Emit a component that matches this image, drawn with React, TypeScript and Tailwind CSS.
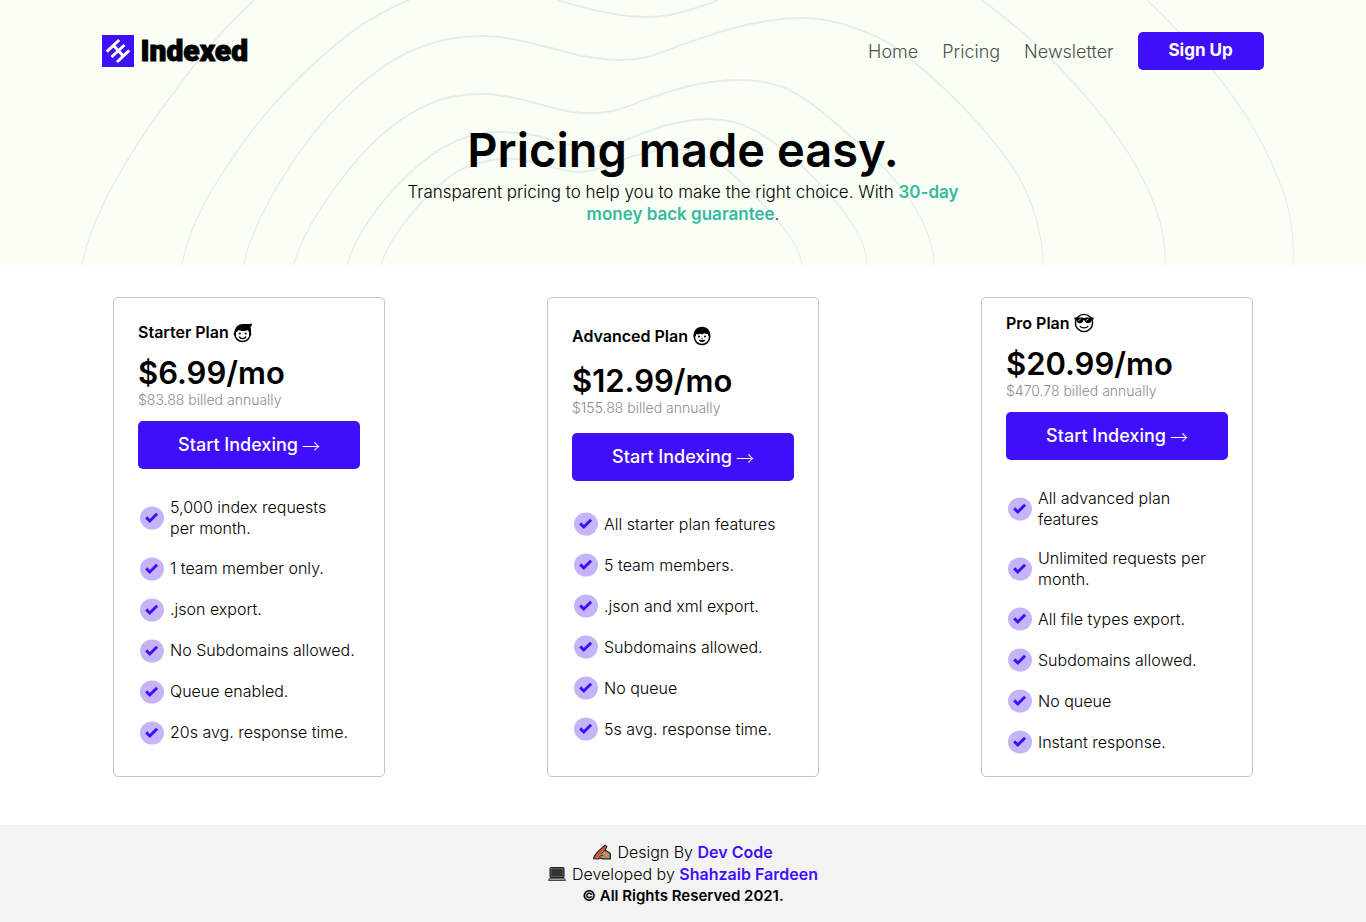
import React from "react";

type Point = [number, number];

const contours: Point[][] = [
  [[82, 265], [102, 207], [142, 137], [193, 67], [223, 31], [254, 0]],
  [[1147, 0], [1179, 32], [1213, 70], [1253, 127], [1280, 183], [1291, 223], [1293, 265]],
  [[182, 265], [195, 223], [220, 177], [263, 117], [307, 70], [353, 31], [380, 14], [409, 0]],
  [[557, 0], [590, 9], [620, 15], [647, 17], [670, 15], [693, 9], [718, 0]],
  [[981, 0], [1010, 22], [1047, 55], [1093, 105], [1127, 151], [1150, 194], [1162, 230], [1165, 265]],
  [[244, 265], [255, 230], [280, 182], [313, 134], [353, 91], [397, 58], [440, 41], [482, 36], [513, 39], [547, 47], [583, 56], [620, 60], [647, 57], [687, 43], [730, 29], [767, 21], [803, 18], [835, 22], [860, 30], [890, 44], [927, 73], [960, 104], [993, 141], [1020, 179], [1037, 222], [1043, 265]],
  [[294, 265], [308, 230], [337, 185], [370, 146], [405, 117], [443, 99], [482, 94], [510, 97], [543, 105], [573, 112], [595, 113], [617, 110], [653, 97], [693, 85], [737, 80], [773, 84], [800, 96], [833, 121], [882, 166], [910, 200], [928, 234], [934, 265]],
  [[347, 265], [363, 230], [393, 190], [433, 154], [467, 137], [497, 132], [533, 135], [563, 143], [590, 147], [620, 142], [657, 128], [687, 121], [710, 119], [740, 124], [773, 142], [807, 171], [840, 207], [860, 238], [867, 265]],
  [[381, 265], [397, 233], [427, 197], [460, 170], [493, 160], [520, 159], [543, 165], [577, 172], [600, 168], [637, 155], [673, 149], [703, 155], [730, 172], [753, 194], [777, 220], [794, 243], [802, 265]],
];

// Control point past the end of a curve, so that it keeps bending there.
const beyond = (a: number[], b: number[], c: number[]) => [3 * a[0] - 3 * b[0] + c[0], 3 * a[1] - 3 * b[1] + c[1]];

// Catmull-Rom spline through the points; x is doubled because the group is
// drawn at half width, which keeps flat stretches heavier than steep ones.
function toPath(points: Point[]): string {
  const p = points.map(([x, y]) => [x * 2, y]);
  const n = p.length;
  const q = [beyond(p[0], p[1], p[2]), ...p, beyond(p[n - 1], p[n - 2], p[n - 3])];
  let d = `M${p[0][0]} ${p[0][1]}`;
  for (let i = 0; i < n - 1; i++) {
    const [a, b, c, e] = q.slice(i, i + 4);
    d += `C${b[0] + (c[0] - a[0]) / 6} ${b[1] + (c[1] - a[1]) / 6} ${c[0] - (e[0] - b[0]) / 6} ${c[1] - (e[1] - b[1]) / 6} ${c[0]} ${c[1]}`;
  }
  return d;
}

function Contours() {
  return (
    <svg className="absolute inset-0 h-full w-full" viewBox="0 0 1366 265" preserveAspectRatio="none" aria-hidden="true">
      <g transform="scale(0.5 1)" fill="none" stroke="#e5ece9" strokeWidth="2">
        {contours.map((c, i) => (
          <path key={i} d={toPath(c)} />
        ))}
      </g>
    </svg>
  );
}

function LogoMark() {
  return (
    <svg className="h-8 w-8" viewBox="0 0 32 32" aria-hidden="true">
      <rect width="32" height="32" fill="#400ffa" />
      <g stroke="#f9fff4" strokeWidth="3" fill="none">
        <path d="M4.800 16.700 17.200 5M9.500 22 15.500 16.500M16.500 15.500 22.500 10M15 27 27.300 15.400M11.500 10.500 21.500 21.200" />
      </g>
    </svg>
  );
}

function CheckBadge() {
  return (
    <svg className="h-6 w-6 shrink-0" viewBox="0 0 24 24" aria-hidden="true">
      <ellipse cx="12" cy="12" rx="12" ry="11.5" fill="#c5b5f8" />
      <path d="M6.200 11.400 9.800 15 17.100 7.700" fill="none" stroke="#400ffa" strokeWidth="3" />
    </svg>
  );
}

function StarterFace() {
  return (
    <svg className="h-5 w-5" viewBox="0 0 20 20" aria-hidden="true">
      <circle cx="9.500" cy="11" r="7.600" fill="#fff" stroke="#000" strokeWidth="1.500" />
      <path d="M1.500 9.500C2 3.500 6 .8 10 1c3 .2 6 .2 9-.6-.2 2-.6 3-1.600 3.600.7 1.700.8 3.300.6 5.500-1.500-.5-2.300-1.500-2.600-2.500C12 8.800 8 8 5.500 7 5 8.500 3.500 9.500 1.500 9.500Z" />
      <path d="M.9 9.500c1.700-.4 2.200 1 1.800 3.500-1.700.2-2.500-1.500-1.800-3.500ZM18 9.500c-1.600-.2-2 1.500-1.500 3.500 1.700 0 2.300-1.600 1.500-3.500Z" />
      <circle cx="6.800" cy="10.500" r="1.100" /><circle cx="12.600" cy="10.500" r="1.100" />
      <path d="M6 13.700c1.900 2.600 5.300 2.600 7.200 0" fill="none" stroke="#000" strokeWidth="1.400" />
    </svg>
  );
}

function AdvancedFace() {
  return (
    <svg className="h-5 w-5" viewBox="0 0 20 20" aria-hidden="true">
      <circle cx="10" cy="11" r="7.600" fill="#fff" stroke="#000" strokeWidth="1.500" />
      <path d="M1.700 11.500C.7 4.500 5 .8 10 .8s9.300 3.700 8.300 10.700c-1.700-.8-2.400-2.200-2.600-4-1 .7-2.500.5-3.700-.5-.8 1.500-2.800 1.600-4 .6-.9.9-2 1.200-3.700.4C4.300 9.500 3.300 10.800 1.700 11.500Z" />
      <circle cx="7" cy="10.600" r="1" /><circle cx="13" cy="10.600" r="1" />
      <path d="M7 14.300c1.700 1.800 4.300 1.800 6 0Z" stroke="#000" strokeWidth=".9" />
      <path d="M9.200 12.300h1.600" stroke="#000" strokeWidth=".8" />
    </svg>
  );
}

function ProFace() {
  return (
    <svg className="h-5 w-5" viewBox="0 0 20 20" aria-hidden="true">
      <circle cx="10" cy="10" r="8.600" fill="#fff" stroke="#000" strokeWidth="1.400" />
      <path d="M.5 4.200c3 .6 6-.3 9.500.7 3.500-1 6.500-.1 9.500-.7v2.200l-2 .4c-.3 2.600-1.500 3.400-3.500 3.400-2.200 0-3-1.400-3.400-3h-1.200C9 8.800 8.200 10.200 6 10.200c-2 0-3.200-.8-3.500-3.400l-2-.4Z" />
      <path d="M4.300 7.700 6.800 5.800M12 7.700l2.500-1.900" stroke="#fff" strokeWidth=".8" />
      <path d="M5.700 12.700c1.700 3 6.900 3 8.600 0" fill="none" stroke="#000" strokeWidth="1.200" />
    </svg>
  );
}

function WritingHand() {
  return (
    <svg className="h-[18px] w-[18px]" viewBox="0 0 18 18" aria-hidden="true">
      <path d="M.6 15.700C1 12.500 3.500 10 6.500 7.200L12 2.200l1.800 1.500-2 3.500 2.400 1 3.200 2.600v5H9.500l-2-.8-2 1Z" fill="#b98c60" stroke="#222" strokeWidth="1.200" />
      <path d="M2 15.200 12.500 3.500" stroke="#e8432e" strokeWidth="1.700" />
      <path d="M5.200 14.600c1.800-2 3.600-2.200 5-2.300M7.500 11.300l4.300-4" stroke="#222" strokeWidth=".8" fill="none" />
    </svg>
  );
}

function Laptop() {
  return (
    <svg className="h-[18px] w-[18px]" viewBox="0 0 18 18" aria-hidden="true">
      <rect x="2" y="2.600" width="14" height="10" rx=".8" fill="#222" stroke="#111" />
      <rect x="3" y="3.500" width="12" height="8.200" fill="#333" stroke="#777" strokeWidth=".7" />
      <path d="M2 13h14l1.600 2.400H.4Z" fill="#aaa" stroke="#111" strokeWidth=".8" />
    </svg>
  );
}

type Plan = {
  name: string;
  Face: () => React.JSX.Element;
  price: string;
  annual: string;
  spacing: string;
  features: string[];
};

const plans: Plan[] = [
  {
    name: "Starter Plan",
    Face: StarterFace,
    price: "$6.99/mo",
    annual: "$83.88 billed annually",
    spacing: "gap-0",
    features: ["5,000 index requests per\u00a0month.", "1 team member only.", ".json export.", "No Subdomains allowed.", "Queue enabled.", "20s avg. response time."],
  },
  {
    name: "Advanced Plan",
    Face: AdvancedFace,
    price: "$12.99/mo",
    annual: "$155.88 billed annually",
    spacing: "gap-1",
    features: ["All starter plan features", "5 team members.", ".json and xml export.", "Subdomains allowed.", "No queue", "5s avg. response time."],
  },
  {
    name: "Pro Plan",
    Face: ProFace,
    price: "$20.99/mo",
    annual: "$470.78 billed annually",
    spacing: "gap-0",
    features: ["All advanced plan features", "Unlimited requests per month.", "All file types export.", "Subdomains allowed.", "No queue", "Instant response."],
  },
];

function PlanCard({ name, Face, price, annual, spacing, features }: Plan) {
  return (
    <article className={`flex h-[480px] w-[272px] flex-col justify-center rounded-[5px] border border-[#c4c4c4] px-6 ${spacing}`}>
      <h2 className="flex items-center gap-1 text-[16px] leading-[21px] font-semibold">
        {name} <Face />
      </h2>
      <div className="mt-3">
        <p className="text-[31px] leading-9 font-semibold">{price}</p>
        <p className="text-[14px] leading-[18px] font-light text-[#8c8c8c]">{annual}</p>
      </div>
      <button type="button" className="mt-3 flex h-12 shrink-0 items-center justify-center gap-1 rounded-[5px] bg-[#400ffa] text-[18px] leading-6 font-medium text-white">
        Start Indexing <span className="font-['Noto_Sans_CJK_JP',sans-serif] font-light">→</span>
      </button>
      <ul className="mt-7 mb-2 flex flex-col gap-[18px] pl-0.5">
        {features.map((f) => (
          <li key={f} className="flex min-h-[23px] items-center gap-1.5">
            <span className="-my-0.5 flex"><CheckBadge /></span>
            <span className="text-[16px] leading-[21px] font-light">{f}</span>
          </li>
        ))}
      </ul>
    </article>
  );
}

export default function App() {
  return (
    <div className="flex min-h-screen flex-col bg-white font-['Inter',sans-serif] text-black">
      <header className="relative bg-[#f9fff4] pb-10">
        <Contours />
        <div className="relative flex items-center justify-between px-[7.5%] pt-8">
          <a href="#" className="flex items-center gap-1.5">
            <LogoMark />
            <span className="font-['Roboto',sans-serif] text-[30px] leading-8 font-black [-webkit-text-stroke:1px_black]">Indexed</span>
          </a>
          <nav className="flex items-center gap-6 text-[18px] font-light text-[#4d514b]">
            <a href="#home">Home</a>
            <a href="#pricing">Pricing</a>
            <a href="#newsletter">Newsletter</a>
            <button type="button" className="h-[38px] w-[126px] rounded-[5px] bg-[#400ffa] text-[17px] font-bold text-white">Sign Up</button>
          </nav>
        </div>
        <div className="relative mx-auto mt-12 max-w-[580px] text-center">
          <h1 className="text-[47px] leading-[63px] font-semibold">Pricing made easy.</h1>
          <p className="text-[17px] leading-[22px] font-light">
            Transparent pricing to help you to make the right choice. With{" "}
            <span className="font-semibold text-[#36b9a0]">30-day money back guarantee</span>.
          </p>
        </div>
      </header>
      <main className="flex flex-wrap justify-around gap-y-8 px-8 pt-8 pb-12">
        {plans.map((p) => (
          <PlanCard key={p.name} {...p} />
        ))}
      </main>
      <footer className="flex grow flex-col items-center bg-[#f3f3f3] py-4 text-[16px] leading-[22px] font-light">
        <p className="flex items-center gap-1.5">
          <WritingHand />
          <span>Design By <a href="#design" className="font-semibold text-[#400ffa]">Dev Code</a></span>
        </p>
        <p className="flex items-center gap-1.5">
          <Laptop />
          <span>Developed by <a href="#developer" className="font-semibold text-[#400ffa]">Shahzaib Fardeen</a></span>
        </p>
        <p className="text-[15px] font-semibold">© All Rights Reserved 2021.</p>
      </footer>
    </div>
  );
}
